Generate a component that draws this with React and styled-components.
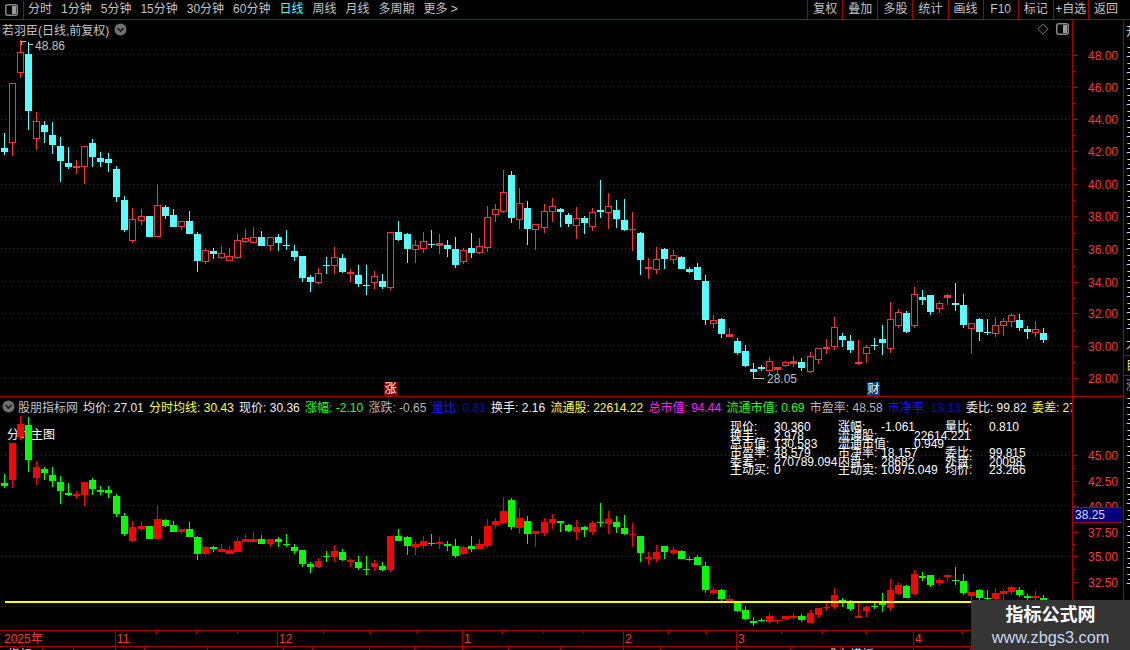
import React from 'react';
import styled, { createGlobalStyle } from 'styled-components';

const FONT = '"Liberation Sans", "Noto Sans CJK SC", sans-serif';
const AXIS_RED = '#a80000';
const LABEL_RED = '#ff3535';

const GlobalStyle = createGlobalStyle`
  html, body {
    margin: 0;
    padding: 0;
    background: #000;
  }
`;

/* wick top, body top, body bottom, wick bottom, u = up / d = down, in upper-panel pixels */
const CANDLES = [
  [133, 148, 152, 155, 'd'], [83, 83, 143, 156, 'u'], [40, 52, 73, 78, 'u'], [42, 54, 111, 130, 'd'],
  [112, 121, 139, 150, 'u'], [121, 125, 132, 143, 'd'], [122, 135, 145, 154, 'd'], [137, 146, 161, 182, 'd'],
  [147, 163, 167, 169, 'd'], [160, 166, 168, 174, 'u'], [146, 146, 167, 184, 'u'], [139, 143, 157, 167, 'd'],
  [152, 158, 162, 167, 'd'], [153, 159, 163, 172, 'd'], [166, 169, 197, 202, 'd'], [196, 200, 230, 232, 'd'],
  [208, 219, 241, 243, 'u'], [209, 216, 221, 225, 'u'], [216, 216, 237, 237, 'd'], [184, 205, 237, 237, 'u'],
  [205, 207, 216, 219, 'd'], [209, 215, 227, 227, 'd'], [221, 221, 227, 230, 'u'], [211, 221, 234, 234, 'd'],
  [232, 234, 261, 272, 'd'], [248, 250, 262, 264, 'u'], [248, 251, 254, 259, 'd'], [246, 253, 258, 259, 'u'],
  [248, 256, 261, 261, 'u'], [234, 240, 258, 259, 'u'], [229, 238, 242, 243, 'u'], [227, 237, 243, 243, 'u'],
  [231, 237, 246, 246, 'd'], [237, 237, 246, 251, 'u'], [234, 237, 243, 251, 'd'], [230, 245, 246, 250, 'd'],
  [245, 251, 257, 261, 'd'], [256, 256, 278, 282, 'd'], [275, 277, 282, 292, 'd'], [268, 273, 283, 284, 'u'],
  [257, 265, 266, 274, 'd'], [247, 257, 266, 274, 'u'], [254, 258, 272, 273, 'd'], [269, 272, 274, 282, 'u'],
  [265, 275, 284, 287, 'd'], [265, 285, 286, 295, 'd'], [271, 276, 283, 289, 'u'], [274, 281, 287, 289, 'd'],
  [232, 232, 288, 290, 'u'], [221, 232, 240, 241, 'd'], [233, 234, 249, 263, 'd'], [240, 245, 250, 263, 'u'],
  [232, 241, 249, 253, 'u'], [230, 244, 245, 248, 'd'], [234, 243, 246, 254, 'u'], [240, 245, 249, 257, 'd'],
  [237, 249, 265, 268, 'd'], [248, 250, 262, 264, 'u'], [233, 248, 253, 258, 'd'], [238, 246, 253, 254, 'u'],
  [206, 217, 248, 252, 'u'], [204, 209, 215, 222, 'u'], [170, 192, 212, 213, 'u'], [171, 175, 218, 223, 'd'],
  [188, 203, 220, 229, 'u'], [201, 208, 229, 245, 'd'], [224, 224, 230, 250, 'u'], [204, 211, 228, 233, 'u'],
  [198, 206, 212, 222, 'u'], [208, 209, 212, 227, 'd'], [213, 215, 224, 227, 'd'], [207, 218, 226, 239, 'u'],
  [216, 218, 223, 234, 'd'], [208, 212, 227, 231, 'u'], [180, 210, 212, 218, 'd'], [193, 206, 213, 229, 'u'],
  [200, 210, 219, 228, 'd'], [199, 220, 230, 231, 'd'], [212, 229, 230, 251, 'u'], [232, 233, 260, 275, 'd'],
  [258, 267, 269, 279, 'u'], [247, 259, 270, 274, 'u'], [248, 249, 259, 269, 'd'], [250, 255, 260, 264, 'u'],
  [256, 257, 269, 269, 'd'], [267, 269, 272, 273, 'd'], [263, 267, 280, 280, 'd'], [275, 281, 320, 325, 'd'],
  [315, 320, 324, 328, 'u'], [318, 319, 334, 338, 'd'], [328, 334, 337, 337, 'u'], [338, 341, 353, 355, 'd'],
  [345, 351, 366, 367, 'd'], [363, 369, 372, 378, 'd'], [365, 367, 369, 371, 'd'], [357, 361, 371, 374, 'u'],
  [367, 367, 370, 374, 'u'], [361, 362, 366, 367, 'u'], [356, 361, 364, 367, 'u'], [358, 362, 368, 371, 'd'],
  [352, 356, 372, 373, 'u'], [348, 348, 360, 364, 'u'], [339, 347, 349, 354, 'u'], [317, 327, 347, 350, 'u'],
  [333, 336, 340, 347, 'd'], [335, 341, 350, 353, 'd'], [340, 362, 364, 365, 'u'], [345, 347, 354, 363, 'u'],
  [338, 345, 346, 350, 'd'], [325, 339, 343, 355, 'd'], [302, 319, 349, 353, 'u'], [309, 312, 326, 328, 'u'],
  [311, 313, 332, 333, 'd'], [287, 294, 326, 328, 'u'], [290, 297, 300, 305, 'd'], [295, 295, 312, 315, 'd'],
  [301, 303, 309, 313, 'u'], [294, 295, 298, 305, 'u'], [283, 303, 305, 311, 'd'], [294, 305, 325, 328, 'd'],
  [323, 323, 329, 354, 'u'], [318, 319, 332, 341, 'd'], [319, 332, 333, 335, 'd'], [317, 325, 334, 337, 'u'],
  [318, 321, 326, 336, 'u'], [313, 315, 322, 327, 'u'], [314, 320, 328, 331, 'd'], [326, 329, 332, 339, 'd'],
  [321, 329, 333, 337, 'u'], [328, 333, 340, 343, 'd'],
];

const JUMPS = [17, 33, 50, 67, 83, 100, 116];
const wickX = (i) => 4 + 8 * i + JUMPS.filter((j) => i >= j).length;
const toLowerY = (y) => Math.round(425 + (y - 54.3) * 0.6222);

const UPPER_GRID = [54, 86, 119, 151, 184, 216, 248, 281, 313, 345, 378];
const LOWER_GRID = [455, 505, 556, 606];

const UPPER_SCALE = [
  ['48.00', 55], ['46.00', 87], ['44.00', 119], ['42.00', 151], ['40.00', 184], ['38.00', 216],
  ['36.00', 249], ['34.00', 282], ['32.00', 313], ['30.00', 346], ['28.00', 378],
];
const LOWER_SCALE = [
  ['45.00', 455], ['42.50', 481], ['40.00', 506], ['37.50', 532], ['35.00', 556], ['32.50', 582],
];

const LEFT_TABS = ['分时', '1分钟', '5分钟', '15分钟', '30分钟', '60分钟', '日线', '周线', '月线', '多周期', '更多 >'];
const RIGHT_BUTTONS = ['复权', '叠加', '多股', '统计', '画线', 'F10', '标记', '+自选', '返回'];

const HEADER_STATS = [
  { label: '均价', value: '27.01', color: '#e8e8e8' },
  { label: '分时均线', value: '30.43', color: '#ffff3c' },
  { label: '现价', value: '30.36', color: '#f0f0f0' },
  { label: '涨幅', value: '-2.10', color: '#20ff20' },
  { label: '涨跌', value: '-0.65', color: '#b8b8b8' },
  { label: '量比', value: '0.81', color: '#1818ff', dim: '#0808d8' },
  { label: '换手', value: '2.16', color: '#f0f0f0' },
  { label: '流通股', value: '22614.22', color: '#ffff3c' },
  { label: '总市值', value: '94.44', color: '#ff20ff' },
  { label: '流通市值', value: '0.69', color: '#20ff20' },
  { label: '市盈率', value: '48.58', color: '#b8b8b8' },
  { label: '市净率', value: '13.13', color: '#1818ff', dim: '#0808d8' },
  { label: '委比', value: '99.82', color: '#f0f0f0' },
  { label: '委差', value: '27', color: '#ffff3c' },
];

const STATS_ROWS = [
  ['现价:', '30.360', '涨幅:', '-1.061', '量比:', '0.810'],
  ['换手:', '2.978', '流通股:', '', '', ''],
  ['总市值:', '130.583', '流通市值:', '', '', ''],
  ['市盈率:', '48.579', '市净率:', '18.157', '委比:', '99.815'],
  ['委差:', '270789.094', '内盘:', '28682', '外盘:', '20098'],
  ['主动买:', '0', '主动卖:', '10975.049', '均价:', '23.266'],
];

const STRIP_ROWS = [
  { text: '开', color: '#d8d8d8', $h: 25 },
  ...Array.from({ length: 18 }, () => ({ text: '三', color: '#d8d8d8', $h: 16 })),
  { text: '大', color: '#d8d8d8', $h: 23, line: true },
  { text: '目', color: '#e8e040', $h: 20, line: true },
  { text: '涨', color: '#b0b0b0', $h: 20 },
  ...Array.from({ length: 12 }, () => ({ text: '三', color: '#d8d8d8', $h: 16 })),
];

const MONTHS = [
  ['11', 115], ['12', 277], ['1', 462], ['2', 623], ['3', 736], ['4', 913],
];
const MINOR_TICKS = [156, 196, 237, 323, 370, 416, 502, 543, 583, 668, 706, 781, 822, 866, 962, 1010];
const BOTTOM_TICKS = [42, 73, 115, 144, 207, 283, 312, 369, 414, 462, 508, 560, 623, 660, 736, 790, 840, 913, 970];

const Screen = styled.div`
  position: relative;
  width: 1130px;
  height: 650px;
  overflow: hidden;
  background: #000;
  font-family: ${FONT};
  font-size: 12px;
  color: #c4c4c4;
`;

const Toolbar = styled.header`
  display: flex;
  align-items: center;
  height: 19px;
  border-bottom: 1px solid ${AXIS_RED};
`;

const MenuToggle = styled.div`
  display: flex;
  align-items: center;
  justify-content: center;
  width: 23px;
  height: 19px;
  border-right: 1px solid ${AXIS_RED};
`;

const Tabs = styled.nav`
  display: flex;
  flex: 1;
  gap: 9px;
  padding-left: 4px;
  line-height: 19px;
`;

const Tab = styled.span`
  white-space: nowrap;
  color: ${(p) => (p.$active ? '#54ffff' : '#c4c4c4')};
`;

const ButtonGroup = styled.div`
  display: flex;
  height: 19px;
  padding-right: 7px;
`;

const ToolButton = styled.span`
  width: 34.1px;
  text-align: center;
  line-height: 19px;
  white-space: nowrap;
  border-left: 1px solid ${AXIS_RED};
`;

const Body = styled.div`
  display: grid;
  grid-template-columns: 1123px 7px;
  height: 630px;
`;

const Panels = styled.div`
  display: flex;
  flex-direction: column;
`;

const Panel = styled.section`
  position: relative;
  display: grid;
  grid-template-columns: 1072px 51px;
  flex: none;
  height: ${(p) => p.$height}px;
  border-bottom: ${(p) => (p.$ruled ? `1px solid ${AXIS_RED}` : 'none')};
`;

const ChartColumn = styled.div`
  position: relative;
  display: flex;
  flex-direction: column;
  overflow: hidden;
`;

const TitleRow = styled.div`
  display: flex;
  align-items: center;
  height: 18px;
  padding: 0 3px 0 2px;
  white-space: nowrap;
  flex: none;
`;

const TitleText = styled.span`
  margin-right: 5px;
`;

const TitleSpacer = styled.span`
  flex: 1;
`;

const HeaderStats = styled.div`
  display: flex;
  flex: none;
  gap: 5.3px;
  margin-left: 5px;
`;

const HeaderStat = styled.span`
  flex: none;
  color: ${(p) => p.$color};
`;

const HeaderValue = styled.span`
  color: ${(p) => p.$dim || 'inherit'};
`;

const IndicatorName = styled.span`
  flex: none;
  margin-left: 3px;
`;

const BadgeSvg = styled.svg`
  flex: none;
`;

const ChartSvg = styled.svg`
  position: relative;
  display: block;
  flex: 1;
`;

const AxisColumn = styled.svg`
  display: block;
  border-left: 1px solid ${AXIS_RED};
  width: 50px;
  height: 100%;
`;

const AxisLabel = styled.text`
  fill: ${LABEL_RED};
  font-family: ${FONT};
  font-size: 12px;
  dominant-baseline: central;
`;

const PriceNote = styled.text`
  fill: #c0c0c0;
  font-family: ${FONT};
  font-size: 12px;
  dominant-baseline: central;
`;

const BottomNote = styled.text`
  fill: ${(p) => p.$fill};
  font-family: ${FONT};
  font-size: 12px;
`;

const Badge = styled.span`
  position: absolute;
  left: ${(p) => p.$x}px;
  top: 362px;
  width: 13px;
  height: 14px;
  line-height: 14px;
  text-align: center;
  color: #fff;
  background: ${(p) => p.$bg};
`;

const MainLabel = styled.span`
  position: absolute;
  left: 7px;
  top: 28px;
  color: #fff;
  font-size: 12px;
`;

const StatsGrid = styled.div`
  position: absolute;
  left: 730px;
  top: 26px;
  display: grid;
  grid-template-columns: 44px 64px 43px 64px 44px 60px;
  grid-auto-rows: 8.7px;
  line-height: 8.7px;
  color: #fff;
  white-space: nowrap;
`;

const WideValue = styled.span`
  position: absolute;
  left: 184px;
  top: ${(p) => p.$top}px;
  line-height: 8.7px;
`;

const PriceTag = styled.div`
  position: absolute;
  left: 1074px;
  top: 110px;
  width: 47px;
  height: 14px;
  line-height: 14px;
  padding-left: 1px;
  color: #d8d8e8;
  background: #000080;
  border-top: 1px solid #a00000;
  border-bottom: 1px solid #a00000;
`;

const TimeAxis = styled.svg`
  display: block;
  flex: none;
  width: 1123px;
  height: 15px;
  border-top: 1px solid ${AXIS_RED};
  border-bottom: 1px solid ${AXIS_RED};
  box-sizing: content-box;
`;

const BottomTicks = styled.svg`
  display: block;
  flex: none;
  width: 1123px;
  height: 3px;
`;

const SideStrip = styled.aside`
  display: flex;
  flex-direction: column;
  border-left: 1px solid ${AXIS_RED};
  overflow: hidden;
`;

const StripRow = styled.div`
  flex: none;
  height: ${(p) => p.$h}px;
  line-height: ${(p) => p.$h}px;
  padding-left: 2px;
  color: ${(p) => p.$color};
  white-space: nowrap;
  border-bottom: ${(p) => (p.$line ? `1px solid ${AXIS_RED}` : 'none')};
  box-sizing: border-box;
`;

const Watermark = styled.div`
  position: absolute;
  right: 0;
  bottom: 0;
  width: 159px;
  height: 50px;
  display: flex;
  flex-direction: column;
  align-items: center;
  justify-content: center;
  background: #353535;
`;

const WatermarkTitle = styled.span`
  font-size: 18px;
  line-height: 24px;
  font-weight: 700;
  color: #fff;
`;

const WatermarkUrl = styled.span`
  font-size: 16.3px;
  line-height: 20px;
  color: #c8d8f0;
`;

const ToggleIcon = () => (
  <svg width="13" height="12" viewBox="0 0 13 12">
    <rect x="0.75" y="0.75" width="11.5" height="10.5" rx="2" fill="none" stroke="#8a8a8a" strokeWidth="1.5" />
    <rect x="7" y="2" width="4" height="8" fill="#9a9a9a" />
  </svg>
);

const ChevronBadge = () => (
  <BadgeSvg width="13" height="13" viewBox="0 0 13 13">
    <circle cx="6.5" cy="6.5" r="6" fill="#707070" />
    <path d="M3.5 5l3 3 3-3" fill="none" stroke="#1c1c1c" strokeWidth="1.6" />
  </BadgeSvg>
);

const Candle = ({ index, data, lower }) => {
  const [wt, bt, bb, wb, dir] = data;
  const map = lower ? toLowerY : (y) => y;
  const x = wickX(index);
  const up = dir === 'u';
  const colour = lower ? (up ? '#ff0000' : '#00ff00') : up ? '#ff3232' : '#54ffff';
  const top = map(bt);
  const height = Math.max(map(bb) - top, 1);
  const hollow = !lower && up && height > 3;
  return (
    <g>
      <rect x={x} y={map(wt)} width="1" height={Math.max(map(wb) - map(wt), 1)} fill={colour} />
      {hollow ? (
        <rect x={x - 2.5} y={top + 0.5} width="6" height={height - 1} fill="#000" stroke={colour} />
      ) : (
        <rect x={x - 3} y={top} width="7" height={height} fill={colour} />
      )}
    </g>
  );
};

const GridLines = ({ rows }) =>
  rows.map((y) => (
    <line key={y} x1="1" x2="1072" y1={y + 0.5} y2={y + 0.5} stroke="#a00000" strokeDasharray="1 3" />
  ));

const Scale = ({ rows, minY, height }) => {
  const ticks = rows.map(([, y]) => y);
  const minors = ticks.slice(1).map((y, i) => Math.round((y + ticks[i]) / 2));
  return (
    <AxisColumn viewBox={`1073 ${minY} 50 ${height}`} shapeRendering="crispEdges">
      {ticks.map((y) => (
        <rect key={y} x="1073" y={y} width="5" height="1" fill={AXIS_RED} />
      ))}
      {minors.map((y) => (
        <rect key={y} x="1073" y={y} width="3" height="1" fill={AXIS_RED} />
      ))}
      {rows.map(([label, y]) => (
        <AxisLabel key={label} x="1088" y={y + 1}>
          {label}
        </AxisLabel>
      ))}
    </AxisColumn>
  );
};

const App = () => (
  <Screen>
    <GlobalStyle />
    <Toolbar>
      <MenuToggle>
        <ToggleIcon />
      </MenuToggle>
      <Tabs>
        {LEFT_TABS.map((tab) => (
          <Tab key={tab} $active={tab === '日线'}>
            {tab}
          </Tab>
        ))}
      </Tabs>
      <ButtonGroup>
        {RIGHT_BUTTONS.map((label) => (
          <ToolButton key={label}>{label}</ToolButton>
        ))}
      </ButtonGroup>
    </Toolbar>

    <Body>
      <Panels>
        <Panel $height={376} $ruled>
          <ChartColumn>
            <TitleRow>
              <TitleText>若羽臣(日线,前复权)</TitleText>
              <ChevronBadge />
              <TitleSpacer />
              <svg width="12" height="12" viewBox="0 0 12 12">
                <path d="M6 .8L11.2 6 6 11.2.8 6z" fill="none" stroke="#7a7a7a" />
              </svg>
              <svg width="20" height="12" viewBox="-7 0 20 12">
                <rect x="0.75" y="0.75" width="11.5" height="10.5" rx="2" fill="none" stroke="#8a8a8a" strokeWidth="1.5" />
                <rect x="7" y="2" width="4" height="8" fill="#9a9a9a" />
              </svg>
            </TitleRow>
            <ChartSvg viewBox="0 38 1072 358" shapeRendering="crispEdges">
              <GridLines rows={UPPER_GRID} />
              {CANDLES.map((c, i) => (
                <Candle key={i} index={i} data={c} />
              ))}
              <path d="M21 41h5M21 41v4M28 44h5" stroke="#c0c0c0" fill="none" />
              <PriceNote x="35" y="46">48.86</PriceNote>
              <path d="M753 378h11M753 378v-5" stroke="#c0c0c0" fill="none" />
              <PriceNote x="767" y="379">28.05</PriceNote>
            </ChartSvg>
            <Badge $x={384} $bg="#800000">涨</Badge>
            <Badge $x={867} $bg="#003c78">财</Badge>
          </ChartColumn>
          <Scale rows={UPPER_SCALE} minY={20} height={376} />
        </Panel>

        <Panel $height={233}>
          <ChartColumn>
            <TitleRow>
              <ChevronBadge />
              <IndicatorName>股朋指标网</IndicatorName>
              <HeaderStats>
                {HEADER_STATS.map((s) => (
                  <HeaderStat key={s.label} $color={s.color}>
                    {s.label}: <HeaderValue $dim={s.dim}>{s.value}</HeaderValue>
                  </HeaderStat>
                ))}
              </HeaderStats>
            </TitleRow>
            <MainLabel>分时主图</MainLabel>
            <ChartSvg viewBox="0 415 1072 215" shapeRendering="crispEdges">
              <GridLines rows={LOWER_GRID} />
              {CANDLES.map((c, i) => (
                <Candle key={i} index={i} data={c} lower />
              ))}
              <rect x="5" y="601" width="1067" height="2" fill="#ffff00" />
            </ChartSvg>
            <StatsGrid>
              {STATS_ROWS.flat().map((cell, i) => (
                <span key={i}>{cell}</span>
              ))}
              <WideValue $top={9}>22614.221</WideValue>
              <WideValue $top={17}>0.949</WideValue>
            </StatsGrid>
          </ChartColumn>
          <Scale rows={LOWER_SCALE} minY={397} height={233} />
          <PriceTag>38.25</PriceTag>
        </Panel>

        <TimeAxis viewBox="0 0 1123 15" shapeRendering="crispEdges">
          <AxisLabel x="4" y="8">2025年</AxisLabel>
          {MONTHS.map(([label, x]) => (
            <React.Fragment key={label}>
              <rect x={x} y="0" width="1" height="15" fill={AXIS_RED} />
              <AxisLabel x={x + 2} y="8">{label}</AxisLabel>
            </React.Fragment>
          ))}
          {MINOR_TICKS.map((x) => (
            <rect key={x} x={x} y="0" width="1" height="3" fill={AXIS_RED} />
          ))}
        </TimeAxis>
        <BottomTicks viewBox="0 0 1123 3" shapeRendering="crispEdges">
          {BOTTOM_TICKS.map((x) => (
            <rect key={x} x={x} y="0" width="1" height="3" fill={AXIS_RED} />
          ))}
          <BottomNote x="8" y="12" $fill="#e0e0e0">指标</BottomNote>
          <BottomNote x="825" y="12" $fill="#e0e0e0">成交</BottomNote>
          <BottomNote x="850" y="12" $fill="#54ffff">模板</BottomNote>
        </BottomTicks>
      </Panels>

      <SideStrip>
        {STRIP_ROWS.map((row, i) => (
          <StripRow key={i} $h={row.$h} $color={row.color} $line={row.line}>
            {row.text}
          </StripRow>
        ))}
      </SideStrip>
    </Body>

    <Watermark>
      <WatermarkTitle>指标公式网</WatermarkTitle>
      <WatermarkUrl>www.zbgs3.com</WatermarkUrl>
    </Watermark>
  </Screen>
);

export default App;
